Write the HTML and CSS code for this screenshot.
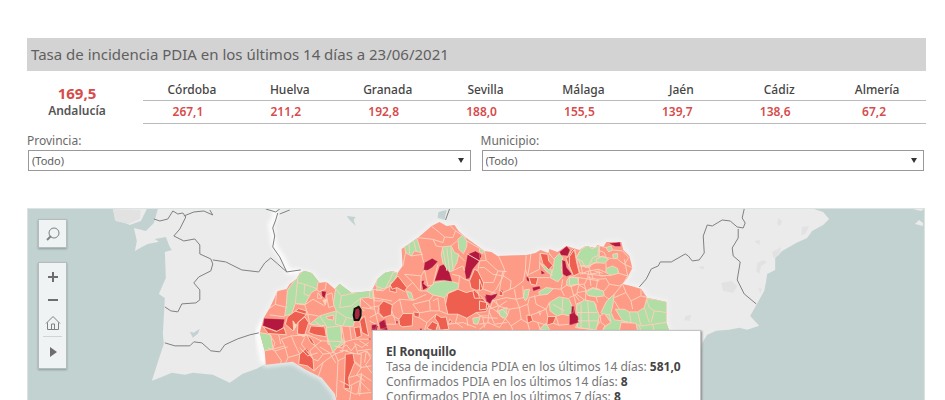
FILE: index.html
```html
<!DOCTYPE html>
<html lang="es">
<head>
<meta charset="utf-8">
<meta name="viewport" content="width=device-width, initial-scale=1">
<title>Tasa de incidencia PDIA</title>
<link rel="stylesheet" href="styles.css">
</head>
<body>
<main class="dashboard">
  <h1 class="title">Tasa de incidencia PDIA en los últimos 14 días a 23/06/2021</h1>

  <section class="rates">
    <div class="total">
      <strong class="total-value">169,5</strong>
      <span class="total-name">Andalucía</span>
    </div>
    <div class="provinces-box">
      <table class="provinces">
        <thead>
          <tr><th scope="col">Córdoba</th><th scope="col">Huelva</th><th scope="col">Granada</th><th scope="col">Sevilla</th><th scope="col">Málaga</th><th scope="col">Jaén</th><th scope="col">Cádiz</th><th scope="col">Almería</th></tr>
        </thead>
        <tbody>
          <tr><td>267,1</td><td>211,2</td><td>192,8</td><td>188,0</td><td>155,5</td><td>139,7</td><td>138,6</td><td>67,2</td></tr>
        </tbody>
      </table>
    </div>
  </section>

  <form class="filters">
    <div class="filter">
      <label for="provincia">Provincia:</label>
      <div class="select-box">
        <select id="provincia"><option>(Todo)</option></select>
        <svg class="arrow" viewBox="0 0 8 6" aria-hidden="true"><path d="M1 0h6L4 5z"/></svg>
      </div>
    </div>
    <div class="filter">
      <label for="municipio">Municipio:</label>
      <div class="select-box">
        <select id="municipio"><option>(Todo)</option></select>
        <svg class="arrow" viewBox="0 0 8 6" aria-hidden="true"><path d="M1 0h6L4 5z"/></svg>
      </div>
    </div>
  </form>

  <section class="map">
    <svg class="map-drawing" viewBox="28 208 897 192" preserveAspectRatio="xMinYMin slice" aria-hidden="true">
      <defs>
        <filter id="soft" x="-5%" y="-10%" width="110%" height="120%"><feGaussianBlur stdDeviation="2"/></filter>
        <path id="region" d="M266 364L265 350L260 332L264 317L270 307L278 290L287 288L290 283L297 278L300 272L305 270L312 272L320 282L327 281L335 288L340 283L352 292L372 290L378 278L385 272L393 270L398 272L403 265L402 248L408 244L418 237L424 232L432 225L440 221L447 225L455 224L459 230L467 237L485 250L492 251L498 255L527 254L536 252L541 249L549 252L550 248L558 251L567 245L580 249L586 245L596 247L598 244L604 246L607 241L622 241L624 249L630 255L633 267L628 277L623 283L632 285L642 288L648 297L654 298L667 301L667 322L670 330L675 340L500 360L380 404L338 404L335 393L322 377L306 369L293 361Z"/>
        <clipPath id="inside"><use href="#region"/></clipPath>
      </defs>
      <path class="land" d="M113 208L116 220L125 222L130 224L141 220L147 208L158 208L154 222L146 230L134 227L137 240L135 250L142 246L148 243L158 241L165 237L167 242L172 249L165 251L166 277L159 293L165 297L163 333L164 343L161 352L152 380L160 377L172 372L185 374L193 372L213 374L230 382L243 373L257 368L266 363L293 361L306 369L322 377L335 393L338 404L690 404L703 342L708 334L717 330L730 329L740 327L748 329L760 325L751 315L765 290L767 280L768 273L776 269L776 257L783 250L797 242L808 237L813 230L824 224L830 218L824 211L815 208Z"/>
      <path class="land" d="M916 223L920 219L924 222L924 225ZM914 208L922 210L925 208Z"/>
      <g class="terrain">
        <path d="M113 208L141 209L140 218L128 223L115 219ZM773 251L782 246L780 254L774 257ZM803 226L810 225L806 233L802 234ZM758 262L764 259L768 261L762 265L760 273L757 270ZM722 282L732 280L738 285L734 292L724 290ZM759 287L763 288L761 292ZM686 315L692 314L690 320L685 319ZM755 240L761 239L760 244ZM779 217L783 220L781 225L778 223ZM699 266L705 265L704 269Z"/>
      </g>
      <g class="water">
        <path d="M190 331L194 332L200 328L198 333L193 337ZM155 238L166 236L171 249L164 244ZM347 215L356 216L354 219L356 225L350 219ZM439 211L447 209L445 219L438 217Z"/>
      </g>
      <use class="halo" href="#region" filter="url(#soft)"/>
      <path class="halo-line" filter="url(#soft)" d="M274 208L276 215L271 224L273 234L274 244L283 258L289 271L301 270M264 320L258 333L261 350L264 362"/>
      <g class="borders">
        <path d="M154 218L160 220L168 218L173 210L178 213L183 212L186 216L180 228L174 235L184 240L195 238L200 244L200 253L211 258L213 263L211 270L199 276L194 282L200 289L200 299L196 302L182 303L178 311L171 310L165 306M184 215L194 211L204 210L213 214L210 209"/>
        <path d="M213 259L226 261L242 269L259 271L265 262L271 257L278 263L287 271L301 269M165 342L175 345L190 345L194 341L202 342L211 350L220 351L225 344L238 338L250 334L259 332M266 208L276 211L280 208M278 212L276 219L273 227L275 235L273 246L280 256L287 271M280 213L290 209M446 219L450 208"/>
        <path d="M640 286L647 278L652 268L659 265L661 261L672 261L686 253L689 255L693 260L700 259L705 252L704 235L708 224L713 225L723 219L731 220L738 226L744 227L746 222L743 217L745 208M739 228L739 237L733 247L734 255L741 261L738 279L745 293L757 303"/>
      </g>
      <use class="salmon" href="#region"/>
      <g clip-path="url(#inside)">
        <!-- Huelva and western Sevilla -->
        <g class="areas" transform="translate(255 210) scale(.33333)">
          <path class="green" d="M98 238L130 195L150 175L178 190L196 216L188 235L170 245L150 282L122 278L110 310L90 315L95 280Z"/>
          <path class="green" d="M243 232L255 215L292 245L355 235L352 258L318 262L316 290L322 320L300 330L295 348L262 345L260 380L272 395L250 410L220 400L218 380L215 345L165 340L195 315L245 300L236 280Z"/>
          <path class="green" d="M366 240L370 205L395 182L430 185L412 225L390 232ZM15 365L48 372L55 415L28 420L5 390Z"/>
          <path class="green" d="M215 350L258 345L262 392L235 425L218 380Z"/>
          <path class="dark" d="M28 322L90 325L85 350L70 362L24 345ZM200 240L215 242L210 262L202 255ZM352 345L372 340L366 360L350 358ZM374 333L392 325L400 358L378 356ZM340 382L349 382L346 390ZM152 412L160 420L158 428L152 424Z"/>
          <path class="red" d="M98 318L132 293L155 300L154 312L125 340L115 360L92 340ZM25 347L65 362L88 350L95 372L40 368ZM130 335L150 318L162 335L150 372L128 370ZM168 345L210 348L215 378L180 372L162 365ZM132 460L135 430L152 415L175 445L178 480L158 465ZM272 430L295 428L300 455L282 500L285 535L268 532L270 495ZM298 350L316 348L320 375L305 382ZM315 330L330 315L342 375L322 365ZM372 290L390 272L412 285L408 308L385 322L370 305ZM155 370L172 385L182 405L168 395ZM408 215L425 212L425 245L405 240Z"/>
          <path class="salmon" d="M190 215L215 212L212 235L195 242L186 238ZM214 318L238 312L236 328L220 325ZM215 252L232 246L238 285L222 290ZM190 245L202 262L188 262Z"/>
          <path class="pale" d="M205 268L216 265L212 282ZM115 330L125 345L117 358ZM130 370L155 372L148 378Z"/>
          <path class="line" d="M66 240L62 280L40 295M60 280L98 290M45 312L90 318M130 195L128 215L150 220L190 235M150 220L148 250L165 255M128 215L122 278M150 282L175 265L210 285M150 282L160 310L190 315M122 278L150 280M245 235L260 255L305 245M260 255L255 290L290 285L318 262M245 300L275 320L318 328M245 300L242 340L262 345M195 315L215 345M275 320L265 345M165 340L160 312L120 300M45 372L60 395L55 415M55 415L90 405L80 385L110 375L160 372L200 390L262 392M90 405L100 440L135 430M100 440L90 462M60 420L80 450L75 465M110 375L120 400L135 430M150 380L140 400L152 415M182 405L165 420L175 445L190 450L205 430L240 425M200 390L182 405L205 430M178 480L205 455L240 430L268 420M205 455L190 500M262 350L270 395L262 425M262 395L300 385L345 385M322 290L360 295L372 345L345 330M360 295L355 240M355 260L412 270M318 262L350 290M412 300L425 340L395 340M240 425L250 450L270 440M250 450L245 560M295 428L320 430L318 470L300 455M282 500L320 490L350 510M320 470L350 465M270 535L300 550L350 545M320 490L310 548M240 405L262 412L275 402L290 420L305 400L322 410L342 395M255 420L280 418M300 395L310 430L335 420L350 435M310 420L350 415M315 390L340 405M270 420L300 428M335 420L330 455M72 372L78 400M180 330L198 345M285 345L290 385M300 285L330 300"/>
        </g>
        <!-- Northern Sevilla and Córdoba -->
        <g class="areas" transform="translate(370 210) scale(.33333)">
          <path class="green" d="M105 105L130 80L142 82L155 125L135 120L125 135L108 125ZM215 130L220 108L245 105L255 125L268 130L262 155L248 180L230 185L222 165ZM265 85L280 72L292 90L292 105L282 128L268 115ZM170 240L195 215L235 208L268 218L265 235L235 245L225 260L190 252ZM18 225L25 195L45 180L72 180L62 205L45 235ZM110 240L125 245L132 268L118 262ZM330 112L342 118L340 128L330 122ZM310 322L332 318L325 340L312 338ZM382 302L412 290L412 315L400 322ZM0 240L10 236L10 262L0 262Z"/>
          <path class="dark" d="M162 178L165 155L188 142L205 152L188 170L175 178ZM195 210L210 165L222 160L240 185L248 212L222 208ZM290 205L285 180L294 130L318 120L335 130L330 150L310 175L300 202ZM155 210L165 208L162 218L175 230L160 238ZM345 255L362 256L380 248L382 254L365 265L358 275L350 272ZM388 240L400 238L398 252L388 252ZM6 342L22 340L18 356L6 354ZM28 336L44 326L52 350L32 355ZM150 352L158 354L154 364ZM78 330L86 332L82 342Z"/>
          <path class="red" d="M235 248L265 235L290 245L315 238L340 262L358 285L350 302L320 305L292 322L265 310L235 310L228 280ZM300 210L315 175L325 180L342 215L340 235L320 238L305 232ZM62 222L85 195L112 230L105 242L82 230L68 235ZM28 285L42 270L68 282L65 312L42 320L28 305ZM88 325L100 308L130 308L128 345L98 348L90 342ZM132 303L150 306L148 320L134 316ZM172 352L188 332L205 340L198 362ZM200 310L215 320L230 318L238 355L212 358L205 335L196 322ZM240 325L248 332L236 342Z"/>
          <path class="line" d="M145 80L190 85L220 95L225 78L210 65L185 45M225 78L250 80L258 60L240 42M190 85L200 105L220 108M258 60L290 80M245 105L262 90M292 90L330 112M155 125L162 155M108 125L100 165M125 135L160 130M105 190L155 195L165 178M105 190L130 215L112 230M155 195L152 240L170 240M132 268L170 250M130 215L150 240M165 178L175 225L190 222L205 160M248 180L280 165L285 180M248 190L270 195L285 205L300 210M270 195L268 218M265 130L285 150M292 128L330 150L350 148L385 180L412 182M330 150L325 180M345 120L350 148M385 180L372 215L340 215M342 235L380 248M400 180L390 238M10 235L40 240L62 222M10 235L15 270L42 270M68 282L90 265L130 268M90 265L100 308M65 312L88 325M0 290L28 285M28 305L0 320M130 280L180 268L192 252M130 280L150 306M180 268L182 300L150 306M225 260L228 280M205 262L210 300L235 310M182 300L210 300M190 270L205 262M148 320L172 335L200 310M172 335L165 358M292 322L295 345M265 310L258 335L280 350M238 340L280 335L320 350M320 305L340 320L385 322M340 320L345 350M358 285L382 302M358 300L375 340L412 335M365 265L390 285L412 270M390 285L382 302M310 240L315 262L340 262M325 240L330 262M220 115L232 180M232 112L240 180M244 110L250 175M118 92L120 128M130 82L140 120"/>
        </g>
        <!-- Jaén and northern Granada -->
        <g class="areas" transform="translate(480 225) scale(.33333)">
          <path class="green" d="M212 155L222 125L225 98L240 82L250 95L245 125L250 150L235 168ZM290 95L305 70L325 58L338 70L360 60L360 110L340 112L330 125L305 120L298 105ZM262 165L270 152L298 155L295 175L275 182L262 178ZM132 215L135 192L150 190L145 215L138 225ZM178 198L200 185L222 188L205 205L180 208ZM210 230L238 213L268 218L282 250L270 270L250 265L232 270L212 255ZM290 235L318 222L350 235L350 262L360 290L345 312L288 305L298 285ZM320 195L340 185L360 190L360 210L330 210ZM58 255L70 250L84 268L78 278L62 270ZM180 110L195 120L215 130L218 150L200 135ZM180 310L200 292L212 315Z"/>
          <path class="dark" d="M240 78L262 60L272 72L265 90L245 88ZM248 102L258 105L262 125L278 145L262 152L250 145ZM18 205L35 208L55 202L48 215L38 222L32 235L20 225ZM140 152L152 156L150 168L142 164ZM158 185L180 180L184 188L162 196ZM184 132L198 142L186 146ZM270 295L275 265L277 240L285 242L286 262L298 275L298 290L275 298ZM0 85L6 88L4 96L0 95Z"/>
          <path class="red" d="M260 98L268 90L275 75L285 65L290 88L300 140L285 150L272 130ZM182 82L205 85L208 105L220 118L208 132L190 112ZM148 155L176 155L170 178L155 175ZM205 272L230 272L222 292L202 298ZM142 268L155 268L160 285L144 292ZM0 160L10 190L0 195ZM60 192L70 200L70 210L58 208ZM178 255L185 258L182 268ZM0 225L22 230L20 250L0 252Z"/>
          <path class="line" d="M55 85L75 130L72 150L40 145L15 125L0 125M72 150L50 190L35 205M72 150L95 165L92 190L70 200M140 88L138 130L132 165L105 185L92 190M155 80L150 120L145 150M182 82L180 130L150 145M138 130L145 150M205 75L215 90M176 155L210 155M130 180L132 215L110 220L105 190M110 220L120 245L145 235L150 215L180 208M145 235L150 268M120 245L90 250L84 268M90 250L55 240L30 250L25 290L60 305L78 278M30 250L40 225L80 215L110 220M55 240L50 225M120 245L125 280L95 300L78 278M125 280L145 292L150 312M155 268L200 250L210 230M200 250L205 272M230 272L238 298L270 295M222 292L238 298M160 285L202 298M250 160L245 190L222 188M262 178L245 190L255 210M275 182L285 215L290 235M295 175L320 190L318 222M300 140L330 145L360 140M298 155L360 165M305 120L310 145M330 125L335 145M295 200L320 195M286 205L300 225M330 150L335 180M0 270L25 270M0 295L30 290M0 310L20 295M220 235L255 255M250 218L248 265M300 250L350 255M320 225L320 305M335 240L335 305M300 285L345 285M210 85L225 100M320 60L315 90L335 110M95 300L100 312M165 208L170 235L200 250M175 290L182 310"/>
        </g>
        <!-- Eastern Jaén, Granada and northern Almería -->
        <g class="areas" transform="translate(570 225) scale(.33333)">
          <path class="green" d="M20 98L35 70L55 58L68 68L90 60L85 90L70 95L58 120L48 125L38 105ZM80 100L100 90L118 100L105 112L82 110ZM110 65L125 60L130 72L118 78ZM110 128L130 120L145 128L148 142L125 148L110 140ZM130 85L145 82L145 98L132 98ZM50 198L70 188L102 195L105 210L80 213L55 208ZM95 260L112 225L135 205L130 240L125 260L135 282L160 285L180 290L210 298L215 318L95 318L120 290ZM138 250L165 250L180 258L205 258L225 245L232 218L255 220L292 228L292 290L305 318L205 318L200 295L160 285ZM22 240L45 222L75 228L82 250L90 270L80 312L25 305ZM0 155L25 155L28 175L0 178Z"/>
          <path class="dark" d="M118 52L135 50L152 48L155 62L138 62ZM0 265L12 260L14 245L18 265L26 272L28 290L0 298Z"/>
          <path class="red" d="M0 92L15 70L22 110L30 142L12 150L0 120Z"/>
          <path class="line" d="M130 72L160 75L178 95L165 115L145 100M165 115L188 125M148 142L175 150L162 172L135 205M175 150L165 100M110 140L88 130L58 135L32 145M58 120L80 110M85 90L110 95L130 98M110 110L110 128M88 130L92 150L125 148M58 135L55 155L85 160L110 158L120 175L105 195M55 155L45 175L25 175M85 160L80 190M45 175L50 198M120 175L150 180L162 172M160 175L170 200L135 215M170 200L185 225L190 250M185 225L215 210L235 215M215 190L215 210M135 225L150 250M180 258L185 290M205 258L215 300L290 290M225 245L240 290M232 220L240 245L255 255L245 290M255 255L292 260M105 210L120 220M80 213L85 230M22 205L45 222M28 178L22 205L0 215M90 270L120 265L125 290M100 315L110 290M30 120L58 120M92 60L110 65M85 72L105 80L110 95M65 140L72 160M75 135L100 142M55 145L110 150M35 235L35 305M55 225L60 308M22 260L85 260M25 285L85 285M250 295L255 318"/>
          <path class="salmon" d="M92 270L105 262L125 290L108 300L95 290ZM155 290L200 292L205 315L150 315Z"/>
        </g>
        <path class="line coast" d="M367 350L371 357L366 364L372 372M354 360L362 366L357 374L365 380M340 380L350 385L360 380L370 390M352 385L350 400M362 372L360 395M268 347L276 350L288 346M320 346L330 352L336 362M300 347L308 355L318 352"/>
      </g>
      <path class="picked" d="M355 308L359 306L361 309L361 315L359 319L355 319L354 314Z"/>
    </svg>

    <div class="controls">
      <div class="panel">
        <button type="button" aria-label="Buscar"><svg viewBox="0 0 16 16"><circle class="stroke" cx="9" cy="7" r="5"/><path class="stroke thick" d="M6 10L2 14"/></svg></button>
      </div>
      <div class="panel">
        <button type="button" aria-label="Acercar"><svg viewBox="0 0 16 16"><path class="fill" d="M7 3h2v4h4v2H9v4H7V9H3V7h4z"/></svg></button>
        <button type="button" aria-label="Alejar"><svg viewBox="0 0 16 16"><path class="fill" d="M3 7h10v2H3z"/></svg></button>
        <button type="button" aria-label="Inicio"><svg viewBox="0 0 16 16"><path class="stroke" d="M1 8.500L8 1.500L15 8.500M2.500 7.500V14.500H13.500V7.500M6.500 14.500V9H9.500V14.500"/></svg></button>
        <button class="more" type="button" aria-label="Más herramientas"><svg viewBox="0 0 16 16"><path class="fill" d="M5 3L12 8L5 13z"/></svg></button>
      </div>
    </div>

    <aside class="tooltip">
      <strong>El Ronquillo</strong>
      <span>Tasa de incidencia PDIA en los últimos 14 días: <b>581,0</b></span>
      <span>Confirmados PDIA en los últimos 14 días: <b>8</b></span>
      <span>Confirmados PDIA en los últimos 7 días: <b>8</b></span>
    </aside>
  </section>
</main>
</body>
</html>
```
FILE: styles.css
```css
* {
  box-sizing: border-box;
}

body {
  margin: 0;
  background: #fff;
  color: #555;
  font-family: "Noto Sans", "Open Sans", sans-serif;
  font-size: 12px;
}

.dashboard {
  display: flex;
  flex-direction: column;
  height: 100vh;
  padding: 38px 19px 0 27px;
}

.title {
  margin: 0;
  padding: 0 4px;
  background: #d3d3d3;
  color: #606060;
  font-size: 15px;
  font-weight: 400;
  line-height: 33px;
}

.rates {
  display: flex;
  gap: 16px;
  padding-top: 9px;
}

.total {
  display: flex;
  flex-direction: column;
  width: 100px;
  padding-top: 4px;
  text-align: center;
}

.total-value {
  color: #d64b4b;
  font-size: 15px;
  line-height: 18px;
}

.total-name {
  font-weight: 600;
  line-height: 18px;
}

.provinces-box {
  flex: 1;
}

.provinces {
  width: 100%;
  table-layout: fixed;
  border-collapse: collapse;
  text-align: center;
}

.provinces th,
.provinces td {
  padding: 0;
  border-bottom: 1px solid #bbb;
  font-weight: 600;
  line-height: 20px;
}

.provinces th {
  color: #444;
  font-weight: 500;
}

.provinces td {
  padding-right: 8px;
  color: #d64b4b;
  line-height: 22px;
}

.provinces td:last-child {
  padding-right: 6px;
}

.filters {
  display: flex;
  gap: 10px;
  padding: 8px 2px 0 0;
}

.filter {
  flex: 1;
}

.filter label {
  display: block;
  color: #6a6a6a;
  line-height: 18px;
}

.select-box {
  position: relative;
  margin-left: 1px;
}

.select-box select {
  display: block;
  width: 100%;
  height: 21px;
  padding: 0 3px;
  border: 1px solid #999;
  border-radius: 0;
  background: #fff;
  color: #606060;
  font: inherit;
  font-size: 11px;
  appearance: none;
}

.arrow {
  position: absolute;
  top: 8px;
  right: 6px;
  width: 8px;
  height: 6px;
  fill: #333;
  pointer-events: none;
}

.map {
  position: relative;
  flex: 1;
  min-height: 0;
  margin: 37px 1px 0 0;
  overflow: hidden;
  border: 1px solid #dde3e3;
  border-bottom: 0;
  background: #c2d2d1;
}

.map-drawing {
  display: block;
  width: 100%;
  height: 100%;
}

.land { fill: #ebebeb; }
.terrain { fill: #e2e2e2; }
.water { fill: #c2d2d1; }

.halo {
  fill: none;
  stroke: #f3f3f3;
  stroke-width: 4px;
}

.halo-line {
  fill: none;
  stroke: #fff;
  stroke-width: 5px;
}

.borders {
  fill: none;
  stroke: #808080;
  stroke-width: 1px;
  stroke-linejoin: round;
}

.areas {
  stroke: #fbd0bd;
  stroke-width: 3px;
  stroke-linejoin: round;
}

.salmon { fill: #fd9b86; }
.green { fill: #b1dea5; }
.red { fill: #ee5f50; }
.dark { fill: #b5183f; stroke-width: 1px; }
.pale { fill: #f5dcb4; }

.line {
  fill: none;
  stroke: #fbd0bd;
}

.coast { stroke-width: 1px; }

.picked {
  fill: #a8293c;
  stroke: #111;
  stroke-width: 2px;
}

.controls {
  position: absolute;
  top: 10px;
  left: 10px;
  display: flex;
  flex-direction: column;
  gap: 14px;
}

.panel {
  display: flex;
  flex-direction: column;
  width: 29px;
  padding: 2px 4px;
  border: 1px solid #b4bcbc;
  background: #f0f3f3;
  box-shadow: 0 1px 2px #8c9a9a;
}

.panel button {
  display: grid;
  place-items: center;
  height: 23px;
  padding: 0;
  border: 0;
  background: none;
}

.panel .more {
  height: 30px;
  margin-top: 2px;
  border-top: 1px solid #d0d4d4;
}

.panel svg {
  width: 16px;
  height: 16px;
}

.fill { fill: #6e6e6e; }

.stroke {
  fill: none;
  stroke: #808080;
  stroke-width: 1px;
}

.thick { stroke-width: 2px; }

.tooltip {
  position: absolute;
  top: 121px;
  left: 344px;
  display: flex;
  flex-direction: column;
  min-width: 329px;
  padding: 13px;
  border: 1px solid #c4c4c4;
  background: #fff;
  box-shadow: 1px 1px 2px #888;
  color: #777;
  line-height: 15px;
  white-space: nowrap;
}

.tooltip strong,
.tooltip b {
  color: #444;
}
```
